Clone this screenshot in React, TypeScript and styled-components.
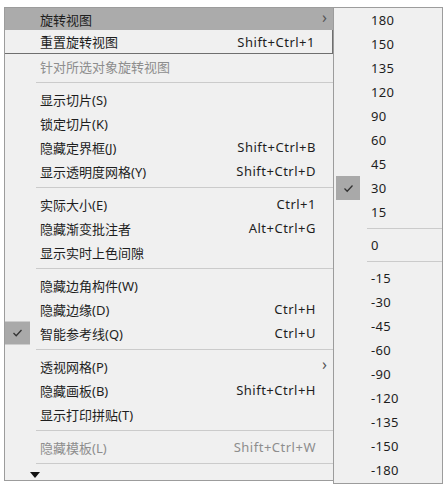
import * as React from 'react';
import styled, { createGlobalStyle } from 'styled-components';

type Item =
    | { kind: 'sep' }
    | {
          kind: 'item';
          label: string;
          shortcut?: string;
          disabled?: boolean;
          checked?: boolean;
          submenu?: boolean;
          state?: 'hover' | 'focus';
          h?: number;
      };

const mainItems: Item[] = [
    { kind: 'item', label: '旋转视图', submenu: true, state: 'hover', h: 22 },
    { kind: 'item', label: '重置旋转视图', shortcut: 'Shift+Ctrl+1', state: 'focus' },
    { kind: 'item', label: '针对所选对象旋转视图', disabled: true },
    { kind: 'sep' },
    { kind: 'item', label: '显示切片(S)' },
    { kind: 'item', label: '锁定切片(K)' },
    { kind: 'item', label: '隐藏定界框(J)', shortcut: 'Shift+Ctrl+B' },
    { kind: 'item', label: '显示透明度网格(Y)', shortcut: 'Shift+Ctrl+D' },
    { kind: 'sep' },
    { kind: 'item', label: '实际大小(E)', shortcut: 'Ctrl+1' },
    { kind: 'item', label: '隐藏渐变批注者', shortcut: 'Alt+Ctrl+G' },
    { kind: 'item', label: '显示实时上色间隙' },
    { kind: 'sep' },
    { kind: 'item', label: '隐藏边角构件(W)' },
    { kind: 'item', label: '隐藏边缘(D)', shortcut: 'Ctrl+H' },
    { kind: 'item', label: '智能参考线(Q)', shortcut: 'Ctrl+U', checked: true },
    { kind: 'sep' },
    { kind: 'item', label: '透视网格(P)', submenu: true },
    { kind: 'item', label: '隐藏画板(B)', shortcut: 'Shift+Ctrl+H' },
    { kind: 'item', label: '显示打印拼贴(T)' },
    { kind: 'sep' },
    { kind: 'item', label: '隐藏模板(L)', shortcut: 'Shift+Ctrl+W', disabled: true },
    { kind: 'sep' },
];

const angles: (string | null)[] = [
    '180', '150', '135', '120', '90', '60', '45', '30', '15',
    null, '0', null,
    '-15', '-30', '-45', '-60', '-90', '-120', '-135', '-150', '-180',
];

const GlobalStyle = createGlobalStyle`
    html, body {
        margin: 0;
        padding: 0;
        background: #ffffff;
    }
    body {
        font-family: "Noto Sans", "Noto Sans CJK SC", sans-serif;
        font-size: 13px;
        color: #1e1e1e;
    }
`;

const Stage = styled.div`
    display: flex;
    align-items: flex-start;
    padding: 7px 0 0 4px;
    width: 444px;
    height: 486px;
    box-sizing: border-box;
`;

const MainMenu = styled.div`
    width: 329px;
    height: 474px;
    box-sizing: border-box;
    background: #f0f0f0;
    border: 1px solid #9c9c9c;
    border-right: none;
    display: flex;
    flex-direction: column;
`;

const Row = styled.div<{ $h: number; $state?: string; $disabled?: boolean }>`
    position: relative;
    height: ${(p) => p.$h}px;
    flex: none;
    box-sizing: border-box;
    display: flex;
    align-items: center;
    padding: 0 17px 0 35px;
    color: ${(p) => (p.$disabled ? '#8d8d8d' : '#1e1e1e')};
    background: ${(p) => (p.$state === 'hover' ? '#ababab' : 'transparent')};
    border: ${(p) => (p.$state === 'focus' ? '1px solid #6f6f6f' : 'none')};
    border-left: none;
    border-top: none;
    white-space: nowrap;
`;

const Label = styled.span`
    flex: 1;
`;

const Shortcut = styled.span`
    letter-spacing: 0.5px;
`;

const Chevron = styled.span`
    position: absolute;
    right: 6px;
    top: 50%;
    transform: translateY(-60%);
    font-size: 16px;
    color: #555;
`;

const CheckBox = styled.div<{ $w: number; $h: number; $left: number }>`
    position: absolute;
    left: ${(p) => p.$left}px;
    top: 50%;
    transform: translateY(-50%);
    width: ${(p) => p.$w}px;
    height: ${(p) => p.$h}px;
    background: #a9a9a9;
    display: flex;
    align-items: center;
    justify-content: center;
`;

const Sep = styled.div<{ $indent: number }>`
    height: 9px;
    flex: none;
    display: flex;
    align-items: center;
    padding-left: ${(p) => p.$indent}px;

    &::after {
        content: '';
        display: block;
        height: 1px;
        flex: 1;
        background: #cbcbcb;
    }
`;

const MoreRow = styled.div`
    flex: 1;
    display: flex;
    align-items: center;
    padding-left: 25px;
`;

const DownArrow = styled.div`
    width: 0;
    height: 0;
    border-left: 5px solid transparent;
    border-right: 5px solid transparent;
    border-top: 6px solid #111;
    margin-top: 1px;
`;

const SubMenu = styled.div`
    width: 110px;
    height: 477px;
    box-sizing: border-box;
    background: #f0f0f0;
    border: 1px solid #9c9c9c;
    display: flex;
    flex-direction: column;
`;

const SubRow = styled.div`
    position: relative;
    height: 24px;
    flex: none;
    display: flex;
    align-items: center;
    padding-left: 37px;
    padding-bottom: 1px;
    box-sizing: border-box;
    letter-spacing: 0.3px;
`;

const Check = () => (
    <svg width="11" height="9" viewBox="0 0 11 9">
        <polyline points="1.5,4.5 4.2,7.2 9.5,1.5" fill="none" stroke="#333" strokeWidth="1.3" />
    </svg>
);

const App: React.FC = () => (
    <>
        <GlobalStyle />
        <Stage>
            <MainMenu>
                {mainItems.map((it, i) =>
                    it.kind === 'sep' ? (
                        <Sep key={i} $indent={31} />
                    ) : (
                        <Row key={i} $h={it.h || 24} $state={it.state} $disabled={it.disabled}>
                            {it.checked && (
                                <CheckBox $w={25} $h={23} $left={0}>
                                    <Check />
                                </CheckBox>
                            )}
                            <Label>{it.label}</Label>
                            {it.shortcut && <Shortcut>{it.shortcut}</Shortcut>}
                            {it.submenu && <Chevron>›</Chevron>}
                        </Row>
                    )
                )}
                <MoreRow>
                    <DownArrow />
                </MoreRow>
            </MainMenu>
            <SubMenu>
                {angles.map((a, i) =>
                    a === null ? (
                        <Sep key={i} $indent={33} />
                    ) : (
                        <SubRow key={i}>
                            {a === '30' && (
                                <CheckBox $w={24} $h={24} $left={2}>
                                    <Check />
                                </CheckBox>
                            )}
                            {a}
                        </SubRow>
                    )
                )}
            </SubMenu>
        </Stage>
    </>
);

export default App;
